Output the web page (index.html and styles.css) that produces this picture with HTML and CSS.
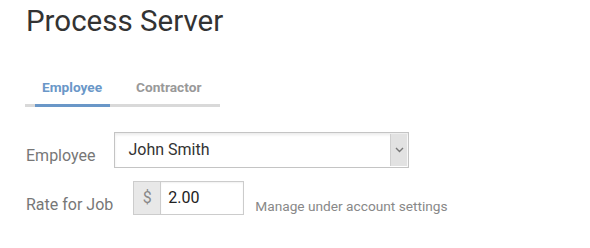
FILE: index.html
```html
<!DOCTYPE html>
<html>
<head>
<meta charset="utf-8">
<link rel="stylesheet" href="styles.css">
</head>
<body>
<div class="page">
  <h1 class="title">Process Server</h1>
  <nav class="tabs">
    <span class="tab active">Employee</span>
    <span class="tab">Contractor</span>
  </nav>
  <div class="row row-employee">
    <label class="label">Employee</label>
    <div class="select">
      <span class="select-value">John Smith</span>
      <span class="select-btn">
        <svg width="9" height="6" viewBox="0 0 9 6"><path d="M1 1 L4.5 4.5 L8 1" fill="none" stroke="#777" stroke-width="1.4"/></svg>
      </span>
    </div>
  </div>
  <div class="row row-rate">
    <label class="label">Rate for Job</label>
    <div class="input-group">
      <span class="addon">$</span>
      <span class="input">2.00</span>
    </div>
    <span class="help">Manage under account settings</span>
  </div>
</div>
</body>
</html>
```
FILE: styles.css
```css
html, body { margin: 0; padding: 0; background: #fff; }
body { font-family: Roboto, "Noto Sans", sans-serif; }
.page { padding: 0 0 0 26px; }
.title {
  margin: 0; padding-top: 5px;
  font-size: 29.5px; font-weight: 400; line-height: 33px; color: #333;
}
.tabs {
  display: flex; gap: 19px;
  margin: 41px 0 0 -1px; padding-left: 10px;
  width: 185px;
  border-bottom: 3px solid #d9d9d9;
}
.tab {
  padding: 0 7px 9px 7px;
  font-size: 13.7px; font-weight: 700; line-height: 16px; color: #999;
  margin-bottom: -3px; border-bottom: 3px solid transparent;
}
.tab.active { color: #6a97c8; border-bottom-color: #6a97c8; width: 61px; }
.row { display: flex; align-items: flex-start; }
.row-employee { margin-top: 25px; }
.row-rate { margin-top: 13px; }
.label {
  font-size: 16px; color: #777; margin-right: 19px; line-height: 20px;
}
.row-employee .label { padding-top: 14px; }
.row-rate .label { padding-top: 14px; margin-right: 20px; }
.select {
  display: flex; width: 295px; height: 36px; box-sizing: border-box;
  border: 1px solid #c4c4c4;
  box-shadow: inset 0 2px 3px rgba(0,0,0,0.08);
}
.select-value { flex: 1; padding-left: 13px; font-size: 16px; line-height: 34px; color: #333; }
.select-btn {
  width: 16px; background: #e2e2e2; border-left: 1px solid #cfcfcf;
  display: flex; align-items: center; justify-content: center;
  margin: 1px;
}
.input-group { display: flex; height: 34px; }
.addon {
  width: 26px; background: #e8e8e8; border: 1px solid #ccc; border-right: 0;
  color: #888; font-size: 16px; line-height: 32px; text-align: center;
}
.input {
  width: 75px; border: 1px solid #ccc; padding-left: 7px;
  font-size: 16px; line-height: 32px; color: #222;
  box-shadow: inset 0 1px 2px rgba(0,0,0,0.06);
}
.help { font-size: 13.7px; color: #888; margin-left: 11px; padding-top: 17px; line-height: 16px; }
```
